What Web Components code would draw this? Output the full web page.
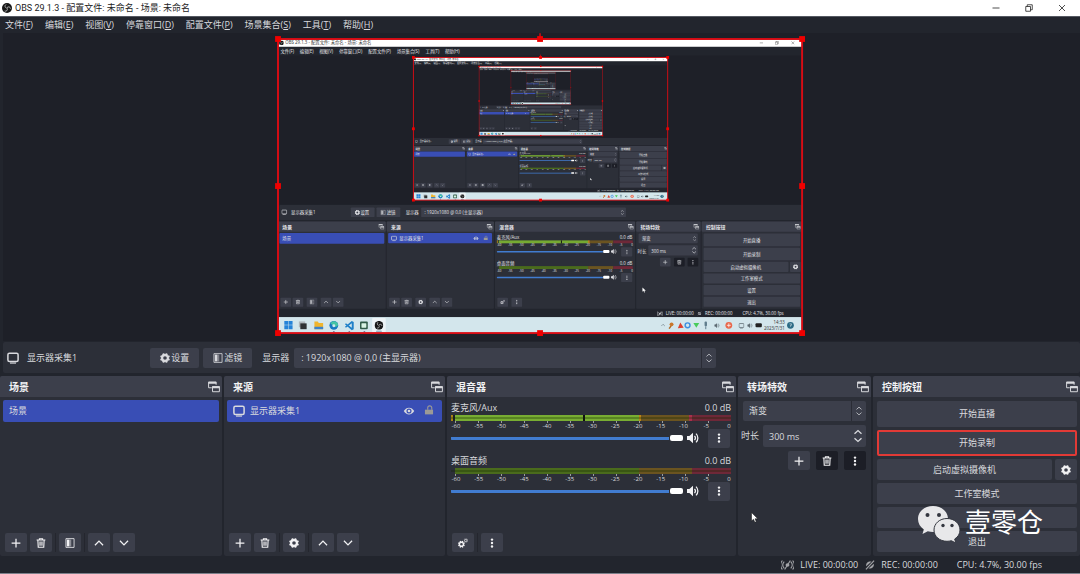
<!DOCTYPE html>
<html lang="zh-CN">
<head>
<meta charset="utf-8">
<title>OBS 29.1.3 - 配置文件: 未命名 - 场景: 未命名</title>
<style>
  :root {
    --win: #22252d; --canvas: #1e2028; --panel: #2c2f38; --raised: #3c3f4b;
    --accent: #394eb5; --text: #d9dade; --blue: #417cd0; --dark: #1c1e26;
  }
  body {
    margin: 0; background: var(--win); color: var(--text);
    font: 9px/12px "Open Sans", "Noto Sans CJK SC", sans-serif;
  }
</style>
</head>
<body>
<obs-window></obs-window>

<script>
/* ---------- icons, all on a 16 x 16 grid ---------- */
const gearTeeth = (cx, cy, r, w) => {
  let s = '';
  for (let i = 0; i < 8; i++) {
    const a = (i + .5) * Math.PI / 4;
    s += `M${(cx + Math.cos(a) * r * .9).toFixed(2)} ${(cy + Math.sin(a) * r * .9).toFixed(2)}L${(cx + Math.cos(a) * r * 1.7).toFixed(2)} ${(cy + Math.sin(a) * r * 1.7).toFixed(2)}`;
  }
  return `<circle cx="${cx}" cy="${cy}" r="${r}" fill="none" stroke="currentColor" stroke-width="${w}"/><path d="${s}" stroke="currentColor" stroke-width="${w}"/>`;
};
const line = (d, w = 1.8) => `<path d="${d}" fill="none" stroke="currentColor" stroke-width="${w}"/>`;
const ICONS = {
  plus: line('M8 1v14M1 8h14', 2),
  trash: line('M1 3.2h14M5.5 3V1.2h5V3M3 3.5l.6 11.3h8.8L13 3.5', 1.8) + '<path d="M5 5.500h6v7H5z" fill="currentColor" opacity=".45"/>' + line('M6.500 6v6M9.500 6v6', 1),
  filter: line('M1.500 1h13v14h-13z', 1.3) + '<path d="M3 2.500h4v11H3z" fill="currentColor"/><path d="M7 2.500h3v11H7z" fill="currentColor" opacity=".45"/>',
  up: line('M1.500 11.500L8 5l6.500 6.500', 2),
  down: line('M1.500 4.500L8 11l6.500-6.500', 2),
  gear: gearTeeth(8, 8, 4.6, 3.4),
  gears: gearTeeth(5.500, 10, 3.200, 2.200) + `<g opacity=".7">${gearTeeth(12.500, 4, 1.900, 1.500)}</g>`,
  dots: '<g fill="currentColor"><circle cx="8" cy="2.500" r="1.900"/><circle cx="8" cy="8" r="1.900"/><circle cx="8" cy="13.500" r="1.900"/></g>',
  monitor: '<rect x="1.200" y="1.800" width="13.600" height="10.800" rx="2" fill="none" stroke="currentColor" stroke-width="2"/><path d="M4 14h8v1.500H4z" fill="currentColor"/>',
  eye: '<path d="M1 8C4.500 2 11.500 2 15 8 11.500 14 4.500 14 1 8z" fill="currentColor"/><circle cx="8" cy="8" r="3.400" fill="#394eb5"/><circle cx="8" cy="8" r="1.800" fill="currentColor"/>',
  lock: '<g color="#9c9a96"><path d="M1.500 7.500h13V15h-13z" fill="currentColor"/><path d="M6 7.500V4.500a3.200 3.200 0 0 1 6.400 0v3" fill="none" stroke="currentColor" stroke-width="1.800"/></g>',
  popout: line('M5 9H.8V1.500h10V5', 1.3) + '<path d="M.5 1h10.600v2.600H.5zM5.500 7h10v2.600h-10z" fill="currentColor"/>' + line('M6 7.500h9.200v6.800H6z', 1.3),
  speaker: '<path d="M0 5.200h3.200L8 1v14l-4.800-4.200H0z" fill="currentColor"/>' + line('M10 5.200a4 4 0 0 1 0 5.600M12 2.200a8 8 0 0 1 0 11.600', 1.7),
  live: line('M4 3.500a7 7 0 0 0 0 9M12 3.500a7 7 0 0 1 0 9M1.700 2a10 10 0 0 0 0 12M14.300 2a10 10 0 0 1 0 12M11.500 2L4.500 14', 1.3) + '<circle cx="8" cy="8" r="2.400" fill="currentColor"/>',
  disk: '<path d="M2 10C1 5 5 1.500 10.500 2.500zM14 6c1 5-3 8.500-8.500 7.500z" fill="currentColor"/>' + line('M14.500 1L1.500 15', 1.8),
  spin: line('M4 5.500L8 1.800l4 3.700M4 10.500l4 3.700 4-3.700', 1.5),
  logo: '<circle cx="8" cy="8" r="8" fill="#161616"/><g fill="none" stroke="#c9c9c9" stroke-width="1.300"><path d="M7.500 8.200C4.500 7.500 4 4 6.500 2.300M8 7.500c2-2.500 5.500-1.300 5.500 1.500M8.300 8.300C9.500 11.500 7 14 4.200 12.800"/></g>',
  minimise: line('M1 8h14', 1.6),
  restore: line('M1.500 5h9.500v9.500H1.500zM4.500 5V1.500H14.500V11.500H11', 1.6),
  close: line('M2 2l12 12M14 2L2 14', 1.6)
};
const icon = (name, x, y, w, h = w) =>
  `<svg x="${x}" y="${y}" width="${w}" height="${h}" viewBox="0 0 16 16">${ICONS[name]}</svg>`;

const define = (name, build) => customElements.define(name, class extends HTMLElement {
  connectedCallback() {
    if (this.shadowRoot) return;
    const root = this.attachShadow({ mode: 'open' });
    const t = document.createElement('template');
    t.innerHTML = build(this);
    root.append(t.content.cloneNode(true));
  }
});
const CONTROL = `button,input,select{font:inherit;color:inherit;margin:0;padding:0;border:0;border-radius:2px;background:var(--raised);box-sizing:border-box;outline:0}`;

define('ui-icon', el => `
  <style>:host{display:block;flex:none;width:12px;height:12px} :host([small]){width:10px;height:10px} :host([wide]){width:13px} svg{display:block;width:100%;height:100%}</style>
  <svg viewBox="0 0 16 16" preserveAspectRatio="none" aria-hidden="true">${ICONS[el.getAttribute('name')]}</svg>`);

define('tool-button', el => `
  <style>${CONTROL}
    :host{display:block;flex:none}
    button{display:flex;align-items:center;justify-content:center;width:22px;height:19px;color:#f2f2f4}
    :host([dark]) button{background:var(--dark)}
    :host([tall]) button{height:21px}
  </style>
  <button aria-label="${el.getAttribute('label')}"><ui-icon small name="${el.getAttribute('name')}"></ui-icon></button>`);

define('tool-row', () => `
  <style>:host{display:flex;gap:3px;margin-top:auto;padding:0 2px}
  ::slotted(i){width:1px;background:#24262e}</style><slot></slot>`);

define('title-bar', () => `
  <style>${CONTROL}
    :host{display:flex;align-items:center;height:16px;padding:0 13px 0 2px;gap:3px;background:#fff;color:#222;font-family:Roboto,"Noto Sans CJK SC",sans-serif}
    h1{margin:0;font:inherit;flex:1}
    nav{display:flex;gap:22px} button{background:none;width:11px;display:grid;place-items:center}
    button ui-icon{width:8px;height:8px}
  </style>
  <ui-icon small name="logo"></ui-icon><h1>OBS 29.1.3 - 配置文件: 未命名 - 场景: 未命名</h1>
  <nav><button aria-label="最小化"><ui-icon name="minimise"></ui-icon></button><button aria-label="还原"><ui-icon name="restore"></ui-icon></button><button aria-label="关闭"><ui-icon name="close"></ui-icon></button></nav>`);

const MENUS = [['文件', 'F', 5], ['编辑', 'E', 45], ['视图', 'V', 85], ['停靠窗口', 'D', 126], ['配置文件', 'P', 186], ['场景集合', 'S', 245], ['工具', 'T', 304], ['帮助', 'H', 344]];
define('menu-bar', () => `
  <style>${CONTROL}
    :host{display:flex;gap:12px;height:17px;padding:0 5px 1px;background:var(--win);border-top:1px solid #555962;box-sizing:border-box}
    button{background:none}
  </style>${MENUS.map(([t, k]) => `<button>${t}(<u>${k}</u>)</button>`).join('')}`);

/* ---------- captured desktop: the window seen inside its own preview ---------- */
const TICKS = [-60, -55, -50, -45, -40, -35, -30, -25, -20, -15, -10, -5, 0];
const box = (x, y, w, h, f = '#3c3f4b', r = 2) => `<rect x="${x}" y="${y}" width="${w}" height="${h}" rx="${r}" fill="${f}"/>`;
const txt = (x, y, s, extra = '') => `<text x="${x}" y="${y}" ${extra}>${s}</text>`;
function desktop() {
  let s = box(0, 0, 1080, 606, '#22252d', 0) + box(0, 0, 1080, 16, '#fff', 0) + icon('logo', 2, 3, 10);
  s += txt(15, 11, 'OBS 29.1.3 - 配置文件: 未命名 - 场景: 未命名', 'fill="#333"');
  s += `<g color="#333">${icon('minimise', 992, 4, 8)}${icon('restore', 1024, 4, 8)}${icon('close', 1057, 4, 8)}</g>`;
  s += MENUS.map(([t, k, x]) => txt(x, 28, `${t}(${k})`)).join('');
  s += box(3, 34, 1077, 307, '#1e2028', 0) + box(3, 342, 1077, 31, '#2c2f38');
  s += icon('monitor', 7, 351, 12) + txt(27, 361, '显示器采集1') + box(150, 347, 49, 20) + box(203, 347, 49, 20);
  s += icon('gear', 158, 352, 11) + txt(170, 361, '设置') + icon('filter', 211, 352, 11) + txt(224, 361, '滤镜') + txt(263, 361, '显示器');
  s += box(295, 347, 422, 20) + txt(302, 361, ': 1920x1080 @ 0,0 (主显示器)') + icon('spin', 704, 352, 11);
  for (const [x, w, t] of [[0, 222, '场景'], [224, 221, '来源'], [447, 289, '混音器'], [738, 133, '转场特效'], [873, 207, '控制按钮']])
    s += box(x, 376, w, 180, '#2c2f38') + box(x, 376, w, 21) + txt(x + 9, 391, t, 'font-size="10" font-weight="700"') + icon('popout', x + w - 15, 381, 12);
  s += box(3, 400, 216, 22, '#394eb5') + txt(9, 415, '场景') + box(227, 400, 214, 21, '#394eb5');
  s += icon('monitor', 233, 405, 12) + txt(250, 415, '显示器采集1') + icon('eye', 402, 405, 12) + icon('lock', 423, 405, 10);
  for (const [x, n] of [[5, 'plus'], [30, 'trash'], [59, 'filter'], [88, 'up'], [113, 'down'], [229, 'plus'], [254, 'trash'], [283, 'gear'], [312, 'up'], [337, 'down'], [452, 'gears'], [481, 'dots']])
    s += box(x, 533, 22, 19) + icon(n, x + 6, 537, 10);
  for (const [y, t, live] of [[0, '麦克风/Aux', 1], [53, '桌面音频', 0]]) {
    s += txt(451, 412 + y, t) + txt(704, 412 + y, '0.0 dB');
    s += box(455, 415 + y, 184, 6, live ? '#76aa32' : '#4a6b1c', 0) + box(639, 415 + y, 52, 6, '#6b5420', 0) + box(691, 415 + y, 40, 6, '#6e2838', 0);
    if (live) s += box(583, 415, 2, 6, '#111', 0) + box(451, 415, 2, 6, '#a98314', 0) + box(639, 415, 3, 6, '#c48a1c', 0);
    s += TICKS.map((v, i) => txt(456 + i * 22.8, 427 + y, v, 'font-size="6" text-anchor="middle"')).join('');
    s += box(451, 437 + y, 219, 3, '#417cd0', 1) + box(670, 435 + y, 13, 6, '#fff') + icon('speaker', 686, 432 + y, 12) + box(707, 429 + y, 23, 19) + icon('dots', 714, 434 + y, 10);
  }
  s += box(743, 401, 122, 20) + txt(750, 415, '渐变') + icon('spin', 853, 406, 11) + txt(741, 440, '时长') + box(763, 425, 102, 21) + txt(769, 440, '300 ms') + icon('spin', 850, 428, 15);
  s += box(787, 451, 22, 18) + icon('plus', 793, 455, 10) + box(816, 451, 22, 18, '#1c1e26') + icon('trash', 822, 455, 10) + box(844, 451, 22, 18, '#1c1e26') + icon('dots', 850, 455, 10);
  for (const [y, h, t] of [[401, 26, '开始直播'], [430, 26, '开始录制'], [459, 21, '启动虚拟摄像机'], [483, 21, '工作室模式'], [507, 21, '设置'], [531, 21, '退出']])
    s += box(877, y, y === 459 ? 175 : 199, h) + txt(y === 459 ? 964 : 976, y + h / 2 + 4, t, 'text-anchor="middle"');
  s += box(1055, 459, 22, 21) + icon('gear', 1061, 464, 11) + '<path d="M751 512v9l2-2 2 4 1-1-1-3h3z" fill="#fff"/>';
  s += icon('live', 781, 560, 12) + txt(799, 569, 'LIVE: 00:00:00') + icon('disk', 864, 561, 9) + txt(880, 569, 'REC: 00:00:00') + txt(957, 569, 'CPU: 4.7%, 30.00 fps');
  /* taskbar */
  s += box(0, 573, 1080, 33, '#d3e6ec', 0) + box(194, 575, 28, 29, '#edf4f7');
  s += '<g fill="#2583d8"><path d="M13 581h8v8h-8zM22 581h8v8h-8zM13 590h8v8h-8zM22 590h8v8h-8z"/></g>';
  s += box(43, 582, 13, 12, '#aeb6bb', 0) + box(46, 586, 13, 12, '#2f3234', 0);
  s += '<path d="M75 582h7l2 3h9v13H75z" fill="#f0b52d"/><path d="M75 593h18v5H75z" fill="#3a83cc"/>';
  s += '<circle cx="115" cy="590" r="9" fill="#1877c2"/><path d="M108 586c4-7 15-5 16 3-2 5-7 5-9 3" fill="#45c3a4"/><circle cx="115" cy="591" r="3" fill="#d3e6ec"/>';
  s += '<path d="M152 581l4 2v15l-4 2-14-12 2-2 12 9v-9l-12 9-2-2z" fill="#1f7fc8"/>';
  s += box(169, 582, 16, 16, '#305a48') + box(172, 586, 10, 9, '#d9f2e4', 1) + icon('logo', 199, 581, 18) + box(202, 601, 12, 2, '#4b7a98', 1);
  s += box(113, 602, 4, 2, '#657', 1) + box(145, 602, 4, 2, '#657', 1) + box(176, 602, 4, 2, '#657', 1);
  s += `<g color="#59666e">${icon('up', 789, 585, 9)}${icon('speaker', 899, 585, 11)}${icon('monitor', 949, 585, 12)}${icon('speaker', 967, 585, 11)}</g>`;
  s += '<path d="M806 597l4-6" stroke="#b5671f" stroke-width="3"/><circle cx="811" cy="588" r="4" fill="#c9772a"/><path d="M824 596l5-12 7 11z" fill="#dd4030"/><circle cx="844" cy="590" r="5" fill="none" stroke="#3d8fe0" stroke-width="3"/><path d="M856 585h12l-6 10z" fill="#48cc5a"/><rect x="879" y="582" width="5" height="10" rx="2" fill="#617d8c"/><path d="M881.500 592v6" stroke="#617d8c" stroke-width="2"/><circle cx="929" cy="590" r="7" fill="#e8684c"/><path d="M925 590h8M929 586v8" stroke="#fff" stroke-width="1.500"/>';
  s += box(984, 586, 13, 8, '#222') + '<g fill="#333" text-anchor="end">' + txt(1044, 588, '14:33') + txt(1044, 600, '2023/7/31') + '</g><circle cx="1056" cy="590" r="7" fill="#2c6b85"/><path d="M1054 587h4v3h-2v3" stroke="#fff" fill="none"/>';
  return s;
}
/* selection frame around a captured desktop; handles shrink with their level */
function frame() {
  let h = '<rect x="0" y="0" width="1080" height="606" fill="none" stroke="#d80c14" stroke-width="4"/><path d="M540 0v-12" stroke="#d80c14" stroke-width="3"/>';
  for (const x of [0, 540, 1080]) for (const y of [0, 303, 606]) if (x !== 540 || y !== 303) h += box(x - 6, y - 6, 12, 12, '#f00000', 0);
  return h;
}
define('preview-pane', () => {
  let t = '', nested = '';
  for (let i = 0; i < 5; i++) {
    t += ' translate(279 38) scale(.4852)';
    nested += `<g transform="${t}"><use href="#desk"/><use href="#frame"/></g>`;
  }
  return `
  <style>
    :host{display:flex;flex:1;align-items:center;justify-content:center;min-height:200px;margin-left:3px;padding:0 3px 2px 0;background:var(--canvas)}
    svg{display:block} .screen{width:48.8%;overflow:visible;fill:#e6e6ea;font-size:9px}
  </style>
  <svg class="screen" viewBox="0 0 1080 606" role="img" aria-label="显示器采集1">
    <g id="desk">${desktop()}</g><g id="frame">${frame()}</g>${nested}
  </svg>`;
});

define('context-bar', () => `
  <style>${CONTROL}
    :host{display:flex;align-items:center;height:31px;margin:1px 0 3px 3px;padding-left:4px;background:var(--panel);border-radius:2px}
    .name{margin:0 73px 0 8px} button{display:flex;align-items:center;justify-content:center;gap:1px;width:49px;height:20px;margin-right:4px}
    label{margin:0 5px 0 6px} .pick{position:relative;flex:0 0 39.3%} select{appearance:none;display:block;width:100%;height:20px;padding-left:7px}
    .pick ui-icon{position:absolute;right:2px;top:5px;color:#b5b7be} .pick::after{content:"";position:absolute;right:14px;top:0;bottom:0;width:1px;background:#2a2c35}
  </style>
  <ui-icon name="monitor"></ui-icon><span class="name">显示器采集1</span>
  <button><ui-icon small name="gear"></ui-icon>设置</button><button><ui-icon small name="filter"></ui-icon>滤镜</button>
  <label for="d">显示器</label><div class="pick"><select id="d"><option>: 1920x1080 @ 0,0 (主显示器)</option></select><ui-icon small name="spin"></ui-icon></div>`);

define('dock-panel', el => `
  <style>${CONTROL}
    :host{display:flex;flex-direction:column;background:var(--panel);border-radius:2px;min-width:0}
    header{display:flex;align-items:center;justify-content:space-between;height:21px;padding:0 2px 0 9px;background:var(--raised);border-radius:2px 2px 0 0}
    h2{margin:0;font-size:10px;font-weight:700;color:#f2f2f4} header button{display:block}
    .body{display:flex;flex-direction:column;flex:1;padding:3px 3px 4px}
  </style>
  <header><h2>${el.getAttribute('heading')}</h2><button aria-label="浮动"><ui-icon name="popout"></ui-icon></button></header>
  <div class="body"><slot></slot></div>`);

define('list-row', () => `
  <style>:host{display:flex;align-items:center;gap:5px;height:22px;padding:0 8px 0 6px;background:var(--accent);border-radius:2px}
  .end{display:flex;gap:9px;margin-left:auto}</style>
  <slot></slot><span class="end"><slot name="end"></slot></span>`);

define('mixer-channel', el => `
  <style>${CONTROL}
    :host{display:block;height:53px;padding:0 2px 0 1px;box-sizing:border-box}
    .top,.labels,.ctl{display:flex;justify-content:space-between} .top{height:15px;align-items:center}
    .meter{height:6px;background:linear-gradient(90deg,transparent 4px,#4a6b1c 4px 67%,#6b5420 67% 86%,#6e2838 86%);position:relative}
    :host([live]) .meter{background:linear-gradient(90deg,#a98314 2px,#1c1e26 2px 4px,#78ad32 4px 132px,#111 132px 134px,#78ad32 134px 67%,#b98318 67% 68%,#6b5420 68% 85%,#a8304c 85% 86%,#6e2838 86%)}
    .meter::after{content:"";position:absolute;inset:2px 0;background:rgba(20,40,0,.3)}
    .ticks{height:2px;margin-left:4px;background:repeating-linear-gradient(90deg,#9a9ca3 0 1px,transparent 1px 23px)}
    .labels{font-size:6px;line-height:6px;margin-right:-3px} .labels span{width:10px;text-align:center}
    .ctl{align-items:center;height:18px;gap:4px;padding-right:1px}
    input{appearance:none;flex:1;min-width:0;height:6px;background:linear-gradient(var(--blue),var(--blue)) 0 2px/calc(100% - 14px) 3px no-repeat}
    input::-webkit-slider-thumb{appearance:none;width:13px;height:6px;border-radius:2px;background:#fff}
    .mute{background:none;width:12px;color:#f2f2f4} tool-button{margin-left:5px}
  </style>
  <div class="top"><label for="v">${el.getAttribute('name')}</label><span>0.0 dB</span></div>
  <div class="meter"></div><div class="ticks"></div>
  <div class="labels">${TICKS.map(v => `<span>${v}</span>`).join('')}</div>
  <div class="ctl"><input id="v" type="range" min="0" max="100" value="100"><button class="mute" aria-label="静音"><ui-icon name="speaker"></ui-icon></button><tool-button name="dots" label="更多"></tool-button></div>`);

define('transition-form', () => `
  <style>${CONTROL}
    :host{display:flex;flex-direction:column;gap:4px;padding:1px 2px 0 0}
    .pick,.spin{position:relative;display:block} .pick{margin-left:2px} select{display:block;appearance:none;width:100%;height:20px;padding-left:6px}
    .pick ui-icon{position:absolute;right:2px;top:5px;color:#b5b7be} .pick::after{content:"";position:absolute;right:14px;top:0;bottom:0;width:1px;background:#2a2c35}
    .line{display:flex;align-items:center;gap:4px} .spin{flex:1} input{display:block;width:100%;height:22px;padding-left:6px}
    .spin ui-icon{position:absolute;right:1px;top:4px;width:14px;height:14px}
    .row{display:flex;justify-content:flex-end;gap:6px}
  </style>
  <div class="pick"><select aria-label="转场"><option>渐变</option></select><ui-icon small name="spin"></ui-icon></div>
  <div class="line"><label for="t">时长</label><span class="spin"><input id="t" value="300 ms"><ui-icon name="spin"></ui-icon></span></div>
  <div class="row"><tool-button name="plus" label="添加"></tool-button><tool-button dark name="trash" label="删除"></tool-button><tool-button dark name="dots" label="更多"></tool-button></div>`);

define('control-buttons', () => `
  <style>${CONTROL}
    :host{display:flex;flex-direction:column;gap:3px;padding:1px 0 0 1px}
    button{height:21px;width:100%} .big{height:26px} .rec{border:2px solid #e23a36}
    .pair{display:flex;gap:3px} .pair button{flex:1}
  </style>
  <button class="big">开始直播</button><button class="big rec">开始录制</button>
  <div class="pair"><button>启动虚拟摄像机</button><tool-button tall name="gear" label="虚拟摄像机设置"></tool-button></div>
  <button>工作室模式</button><button aria-label="设置"></button><button>退出</button>`);

define('status-bar', () => `
  <style>:host{display:flex;align-items:center;justify-content:flex-end;height:18px;padding:1px 38px 0 0;border-bottom:1px solid #7b808a;box-sizing:border-box}
  span{display:flex;align-items:center;gap:6px} .rec{margin:0 19px 0 7px} ui-icon{color:#a3a4a8}</style>
  <span><ui-icon wide name="live"></ui-icon>LIVE: 00:00:00</span><span class="rec"><ui-icon small name="disk"></ui-icon>REC: 00:00:00</span><span>CPU: 4.7%, 30.00 fps</span>`);

define('brand-mark', () => `
  <style>:host{position:absolute;right:37px;bottom:32px;display:flex;align-items:center;gap:5px;font-size:26px;color:#fff;pointer-events:none}
  svg{width:42px;height:36px} span{line-height:26px;margin-bottom:4px}</style>
  <svg viewBox="0 0 42 36" aria-hidden="true"><path d="M15 0C6.500 0 0 5.500 0 13c0 4.300 2.200 8 5.800 10.400L4.500 28l5.300-2.700c1.700.5 3.400.7 5.200.7 8.500 0 15-5.700 15-13S23.500 0 15 0z" fill="#e8e8ea"/><path d="M29 12.500c-7.300 0-13 5-13 11.500s5.700 11.300 13 11.300c1.500 0 3-.2 4.300-.6l4.500 2.300-1.100-4C40 31 42 27.800 42 24c0-6.500-5.700-11.500-13-11.500z" fill="#e8e8ea" stroke="#33363f"/><g fill="#33363f"><circle cx="9.500" cy="9" r="2"/><circle cx="21" cy="9" r="2"/><circle cx="25" cy="19.500" r="1.700"/><circle cx="34" cy="19.500" r="1.700"/></g></svg><span>壹零仓</span>`);

define('obs-window', () => `
  <style>
    :host{display:flex;flex-direction:column;min-height:100vh;position:relative}
    main{display:flex;flex-direction:column;flex:1}
    .docks{display:grid;grid-template-columns:222fr 221fr 289fr 133fr 207fr;gap:2px}
    .pointer{position:absolute;left:69.5%;bottom:51px;width:8px;height:11px}
  </style>
  <title-bar></title-bar><menu-bar></menu-bar>
  <main><preview-pane></preview-pane><context-bar></context-bar>
  <div class="docks">
    <dock-panel heading="场景"><list-row>场景</list-row>
      <tool-row><tool-button name="plus" label="添加"></tool-button><tool-button name="trash" label="删除"></tool-button><i></i><tool-button name="filter" label="滤镜"></tool-button><i></i><tool-button name="up" label="上移"></tool-button><tool-button name="down" label="下移"></tool-button></tool-row></dock-panel>
    <dock-panel heading="来源"><list-row><ui-icon name="monitor"></ui-icon>显示器采集1<ui-icon slot="end" name="eye"></ui-icon><ui-icon slot="end" name="lock" small></ui-icon></list-row>
      <tool-row><tool-button name="plus" label="添加"></tool-button><tool-button name="trash" label="删除"></tool-button><i></i><tool-button name="gear" label="属性"></tool-button><i></i><tool-button name="up" label="上移"></tool-button><tool-button name="down" label="下移"></tool-button></tool-row></dock-panel>
    <dock-panel heading="混音器"><mixer-channel live name="麦克风/Aux"></mixer-channel><mixer-channel name="桌面音频"></mixer-channel>
      <tool-row><tool-button name="gears" label="高级音频属性"></tool-button><i></i><tool-button name="dots" label="更多"></tool-button></tool-row></dock-panel>
    <dock-panel heading="转场特效"><transition-form></transition-form></dock-panel>
    <dock-panel heading="控制按钮"><control-buttons></control-buttons></dock-panel>
  </div></main>
  <status-bar></status-bar><brand-mark></brand-mark>
  <svg class="pointer" viewBox="0 0 8 11" aria-hidden="true"><path d="M.5.5v8.500l2-1.700 1.300 3 1.500-.6-1.300-2.900h2.800z" fill="#fff" stroke="#111" stroke-width=".5"/></svg>`);
</script>
</body>
</html>
